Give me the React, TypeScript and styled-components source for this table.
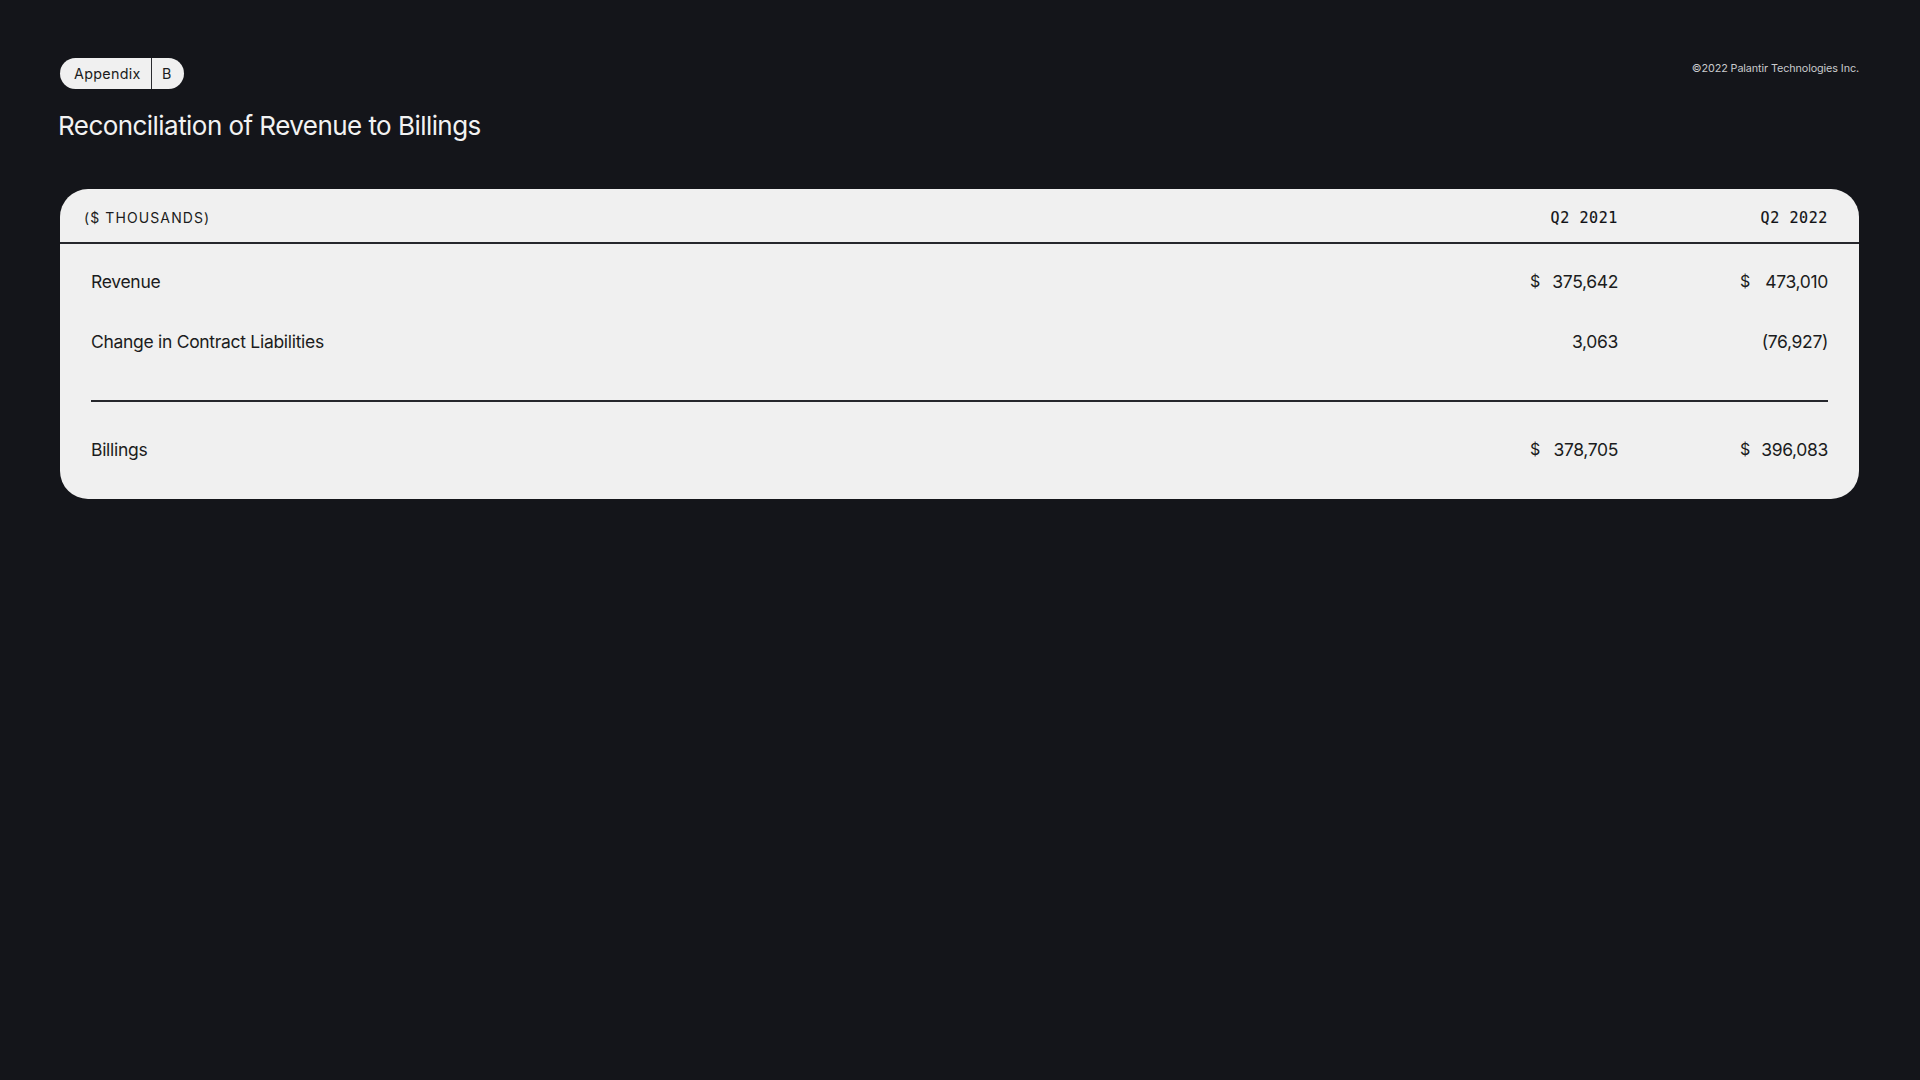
import React from "react";
import styled, { createGlobalStyle } from "styled-components";

const GlobalStyle = createGlobalStyle`
  html, body {
    margin: 0;
    padding: 0;
    background: #14151a;
  }
  body {
    font-family: Inter, "Liberation Sans", sans-serif;
    color: #1b1c20;
  }
`;

const Page = styled.div`
  width: 1920px;
  height: 1080px;
  box-sizing: border-box;
  padding: 58px 61px 0 60px;
  background: #14151a;
`;

const TopBar = styled.div`
  display: flex;
  justify-content: space-between;
  align-items: flex-start;
`;

const Badge = styled.div`
  display: inline-flex;
  align-items: stretch;
  height: 31px;
  border-radius: 16px;
  background: #f0f0f0;
  overflow: hidden;
  font-size: 14.3px;
  color: #1b1c20;
`;

const BadgePart = styled.span<{ $pad: string }>`
  display: flex;
  align-items: center;
  padding: ${(p) => p.$pad};
  letter-spacing: 0.3px;
`;

const BadgeDivider = styled.span`
  width: 1.5px;
  background: #2a2b30;
`;

const Copyright = styled.div`
  margin-top: 4px;
  font-size: 10.8px;
  color: #c9cacd;
  letter-spacing: -0.1px;
`;

const Title = styled.h1`
  margin: 19px 0 0 -2px;
  font-weight: 400;
  font-size: 26px;
  line-height: 36px;
  letter-spacing: -0.55px;
  color: #f2f2f2;
`;

const Card = styled.div`
  margin-top: 45px;
  background: #f0f0f0;
  border-radius: 28px;
  overflow: hidden;
`;

const HeaderRow = styled.div`
  display: grid;
  grid-template-columns: 1fr 210px 210px;
  align-items: center;
  height: 49px;
  padding: 4px 31px 0 24px;
  border-bottom: 2px solid #26272c;
`;

const Unit = styled.div`
  font-size: 14px;
  letter-spacing: 1.1px;
  color: #1b1c20;
`;

const PeriodHead = styled.div`
  text-align: right;
  font-family: "DejaVu Sans Mono", "Liberation Mono", monospace;
  font-size: 15px;
  letter-spacing: 0.6px;
  color: #111215;
  -webkit-text-stroke: 0.15px #111215;
`;

const Body = styled.div`
  padding: 7px 31px 20px 31px;
`;

const Row = styled.div<{ $top?: number }>`
  display: grid;
  grid-template-columns: 1fr 210px 210px;
  align-items: center;
  height: 60px;
  margin-top: ${(p) => p.$top ?? 0}px;
`;

const Label = styled.div`
  font-size: 17.5px;
  letter-spacing: -0.3px;
  color: #1b1c20;
`;

const ValueCol = styled.div`
  display: flex;
  justify-content: flex-end;
`;

const Value = styled.div`
  display: flex;
  justify-content: space-between;
  width: 88px;
  font-size: 17.5px;
  letter-spacing: -0.35px;
  color: #1b1c20;
`;

const Dollar = styled.span`
  font-size: 16px;
`;

const Rule = styled.div`
  height: 2px;
  margin-top: 29px;
  background: #26272c;
`;

type Line = { label: string; a: string; b: string; dollar: boolean };

const lines: Line[] = [
  { label: "Revenue", a: "375,642", b: "473,010", dollar: true },
  { label: "Change in Contract Liabilities", a: "3,063", b: "(76,927)", dollar: false },
];

const Cell = ({ v, dollar }: { v: string; dollar: boolean }) => (
  <ValueCol>
    <Value>
      <Dollar>{dollar ? "$" : ""}</Dollar>
      <span>{v}</span>
    </Value>
  </ValueCol>
);

export default function App() {
  return (
    <>
      <GlobalStyle />
      <Page>
        <TopBar>
          <Badge>
            <BadgePart $pad="0 10px 0 14px">Appendix</BadgePart>
            <BadgeDivider />
            <BadgePart $pad="0 12px 0 10px">B</BadgePart>
          </Badge>
          <Copyright>©2022 Palantir Technologies Inc.</Copyright>
        </TopBar>
        <Title>Reconciliation of Revenue to Billings</Title>
        <Card>
          <HeaderRow>
            <Unit>($ THOUSANDS)</Unit>
            <PeriodHead>Q2 2021</PeriodHead>
            <PeriodHead>Q2 2022</PeriodHead>
          </HeaderRow>
          <Body>
            {lines.map((l) => (
              <Row key={l.label}>
                <Label>{l.label}</Label>
                <Cell v={l.a} dollar={l.dollar} />
                <Cell v={l.b} dollar={l.dollar} />
              </Row>
            ))}
            <Rule />
            <Row $top={17}>
              <Label>Billings</Label>
              <Cell v="378,705" dollar />
              <Cell v="396,083" dollar />
            </Row>
          </Body>
        </Card>
      </Page>
    </>
  );
}
